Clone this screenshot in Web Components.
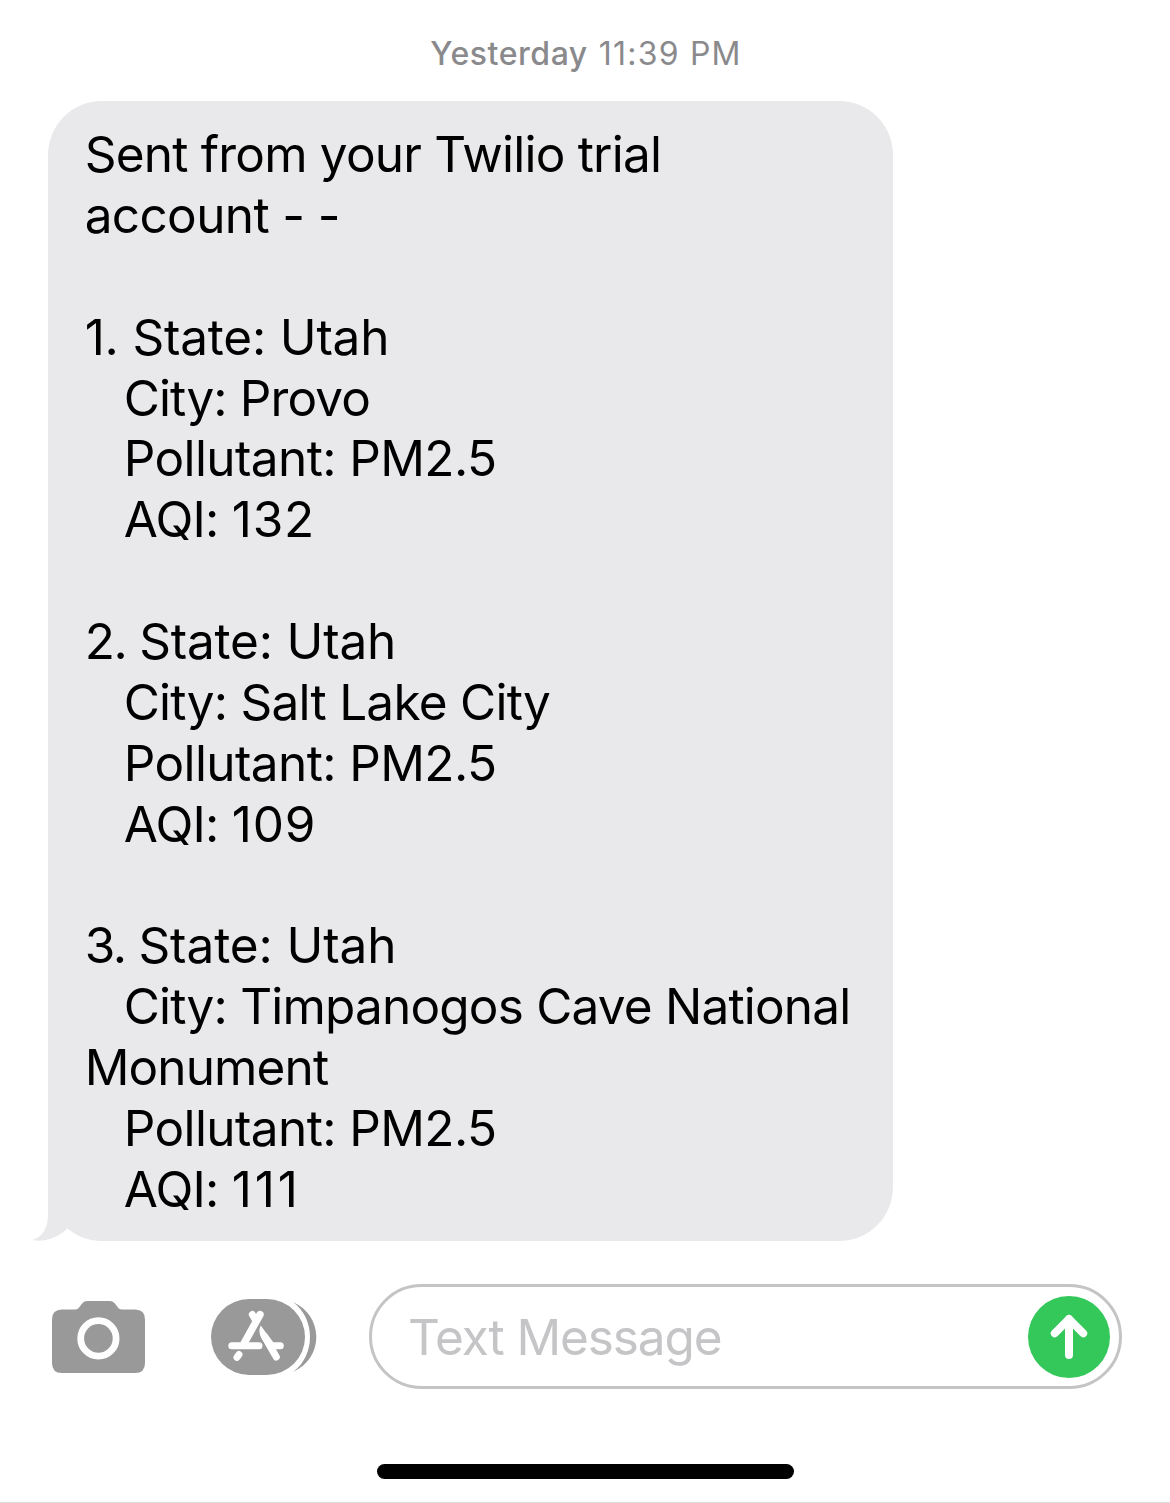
<!DOCTYPE html>
<html lang="en"><head><meta charset="utf-8"><title>Messages</title>
<style>html,body{margin:0;background:#fff}body{font-family:Inter,"Liberation Sans",sans-serif}</style></head>
<body><message-screen></message-screen>
<script>
const define=(name,html)=>customElements.define(name,class extends HTMLElement{
  constructor(){super();this.attachShadow({mode:'open'}).innerHTML=html}
});
define('time-stamp',`<style>:host{display:flex;gap:11px;justify-content:center;align-items:center;height:101px;padding:6px 0 0 2px;box-sizing:border-box;color:#8a8a8d;font-size:32px;white-space:pre}b{font-weight:550;letter-spacing:.55px}span{letter-spacing:1.2px}</style><b><slot name="day"></slot></b><span><slot></slot></span>`);
customElements.define('message-line',class extends HTMLElement{
  constructor(){super();this.attachShadow({mode:'open'}).innerHTML=`<style>:host{display:block;height:60.87px;line-height:60.87px;white-space:pre}:host([indent]){padding-left:39px}</style><slot></slot>`}
  connectedCallback(){this.style.letterSpacing=(this.getAttribute('track')||0)+'px'}
});
define('message-bubble',`<style>:host{display:block;position:relative;box-sizing:border-box;width:845px;height:1140px;margin-left:48px;padding:23.15px 0 0 36.7px;border-radius:54px;background:#e9e9eb;color:#000;font-size:49.5px}svg{position:absolute;left:-16px;bottom:0}</style><slot></slot><svg width="36" height="60" viewBox="0 0 36 60"><path d="M16 0V34C16 46 11 56 1 58.5V59.3C13 61 25 57 35 48L30 25Z" fill="#e9e9eb"/></svg>`);
define('camera-icon',`<style>:host{display:block;width:93px;height:72px}svg{display:block}</style><svg width="93" height="72" viewBox="0 0 93 72"><path d="M10 8.5H23C29 8.5 28 0 36 0H57C65 0 64 8.5 70 8.5H83Q93 8.5 93 18.5V62Q93 72 83 72H10Q0 72 0 62V18.5Q0 8.5 10 8.5Z" fill="#999"/><circle cx="46.4" cy="37.4" r="17.7" fill="none" stroke="#fff" stroke-width="6.8"/></svg>`);
define('apps-icon',`<style>:host{display:block;width:106px;height:76px}svg{display:block}</style><svg width="106" height="76" viewBox="0 0 106 76"><path d="M82 3C97 10 105.3 23 105.3 38C105.3 53 97 66 82 73C93 65 99 52 99 38C99 24 93 11 82 3Z" fill="#999"/><rect width="94" height="76" rx="38" fill="#999"/><g fill="none" stroke="#fff" stroke-width="7" stroke-linecap="round"><path d="M20.8 46.7H48M63 46.7H69.3M41.3 15.5L44.5 21M28 55.5L26 58.3M54 38L65.3 58"/><path stroke-width="7.4" d="M49 15.6L33 44.5"/></g><path d="M49.7 26.5Q46.5 33 51 40L61 57L66 48L54.5 33Z" fill="#fff"/></svg>`);
define('send-button',`<style>:host{display:block;width:82px;height:82px}svg{display:block}</style><svg width="82" height="82" viewBox="0 0 82 82"><circle cx="41" cy="41" r="41" fill="#34c759"/><path d="M41 59V23M26.8 37.3L41 23L55.2 37.3" fill="none" stroke="#fff" stroke-width="8" stroke-linecap="round" stroke-linejoin="round"/></svg>`);
define('message-field',`<style>:host{display:flex;box-sizing:border-box;width:753px;height:105px;align-items:center;justify-content:space-between;border:3px solid #c4c4c5;border-radius:53px;padding:0 9px 0 36px;color:#c5c5c7;font-size:49.5px;letter-spacing:-1.1px}</style><span><slot></slot></span><send-button></send-button>`);
define('compose-bar',`<style>:host{display:flex;align-items:center;height:105px;margin-top:43px;padding-left:52px}apps-icon{margin-left:66px}message-field{margin-left:52px}</style><camera-icon></camera-icon><apps-icon></apps-icon><message-field><slot></slot></message-field>`);
define('home-indicator',`<style>:host{display:flex;flex:1;justify-content:center;align-items:flex-end;box-sizing:border-box;padding-bottom:23px;border-bottom:1px solid #dcdcdc}i{width:417px;height:15px;border-radius:8px;background:#000}</style><i></i>`);
define('message-screen',`<style>:host{display:flex;flex-direction:column;width:1170px;height:1503px;overflow:hidden;background:#fff}.num{letter-spacing:-1.3px}.digits{letter-spacing:.8px}.ones{letter-spacing:2.9px}</style>
<time-stamp><span slot="day">Yesterday</span>11:39 PM</time-stamp>
<message-bubble>
<message-line track="-.79">Sent from your Twilio trial</message-line>
<message-line track="-.64">account - -</message-line>
<message-line></message-line>
<message-line track="-.2">1. State: Utah</message-line>
<message-line indent track="-.87">City: Provo</message-line>
<message-line indent track="-.6">Pollutant: PM2.5</message-line>
<message-line indent track="-.75">AQI: <span class="digits">132</span></message-line>
<message-line></message-line>
<message-line track="-.2"><span class="num">2. </span>State: Utah</message-line>
<message-line indent track="-.75">City: Salt Lake City</message-line>
<message-line indent track="-.6">Pollutant: PM2.5</message-line>
<message-line indent track="-.75">AQI: <span class="digits">109</span></message-line>
<message-line></message-line>
<message-line track="-.1"><span class="num">3. </span>State: Utah</message-line>
<message-line indent track="-.81">City: Timpanogos Cave National</message-line>
<message-line track="-.87">Monument</message-line>
<message-line indent track="-.6">Pollutant: PM2.5</message-line>
<message-line indent track="-.75">AQI: <span class="ones">111</span></message-line>
</message-bubble>
<compose-bar>Text Message</compose-bar><home-indicator></home-indicator>`);
</script></body></html>
